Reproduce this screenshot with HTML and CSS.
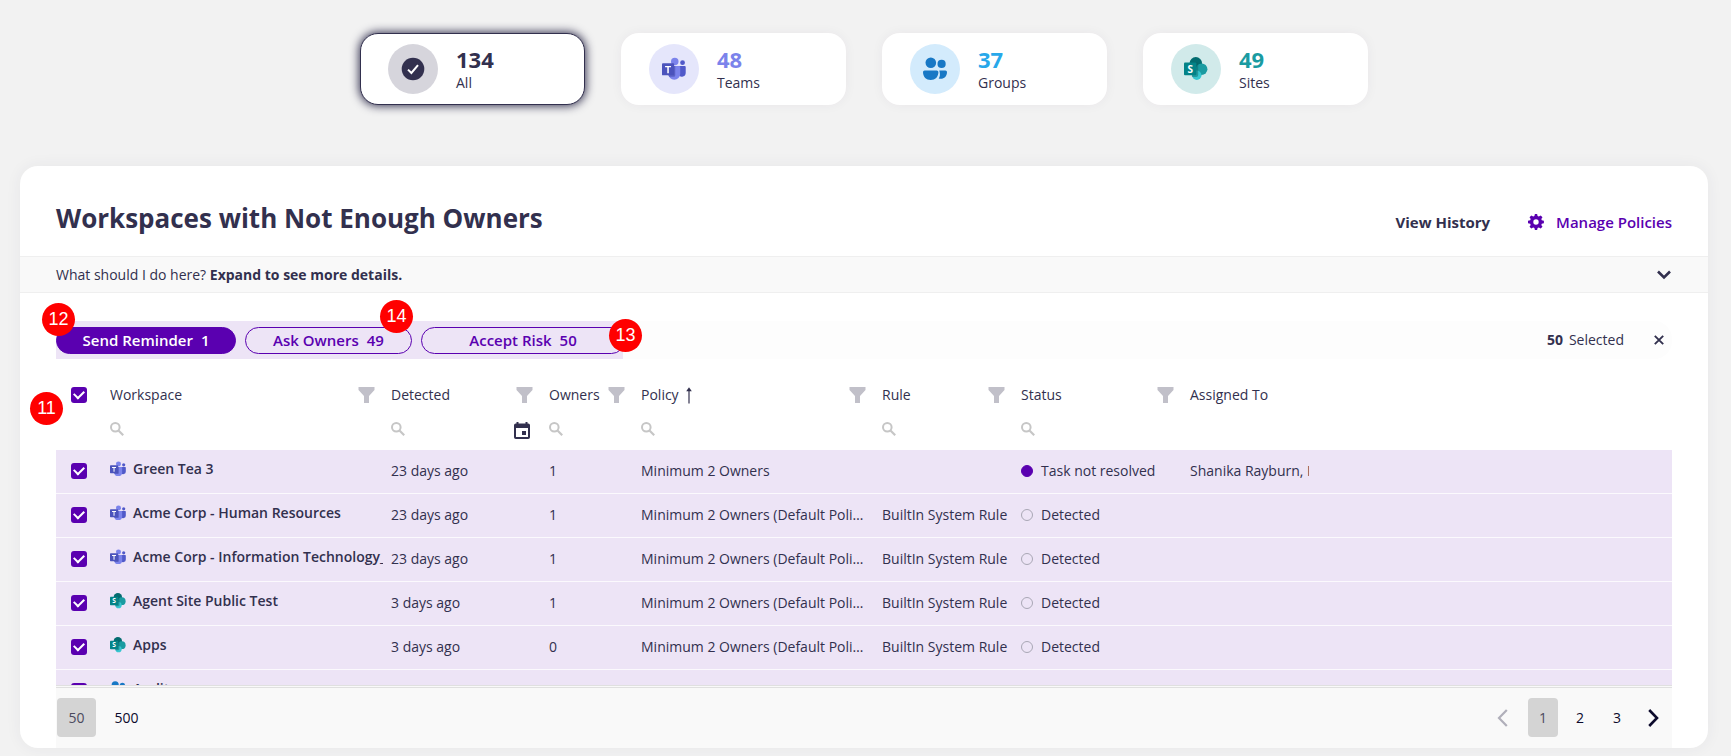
FILE: index.html
```html
<!DOCTYPE html>
<html lang="en">
<head>
<meta charset="utf-8">
<title>Workspaces with Not Enough Owners</title>
<link rel="stylesheet" href="styles.css">
</head>
<body>
<svg class="sprite" aria-hidden="true">
  <symbol id="i-teams" viewBox="0 0 25 24">
    <circle cx="21.4" cy="5.4" r="2.5" fill="#5059c9"/>
    <path d="M16.5 8.8h7.2a1 1 0 0 1 1 1v6a4.1 4.1 0 0 1-7.5 2.4z" fill="#5059c9"/>
    <circle cx="13.3" cy="4.2" r="3.9" fill="#7b83eb"/>
    <path d="M7.5 8.8h10.4a1.1 1.1 0 0 1 1.1 1.1v7a6.2 6.2 0 0 1-12.4 0V9.7z" fill="#7b83eb"/>
    <path d="M6.6 8.8h7.2v9.6a1.6 1.6 0 0 1-1.6 1.6H7.4a6.5 6.5 0 0 1-.8-3z" fill="#5b62c5"/>
    <rect x="0" y="6" width="12.6" height="12.6" rx="1" fill="#4b53bc"/>
    <path d="M3.2 8.8h6.2v1.5H7.1v6H5.5v-6H3.2z" fill="#fff"/>
  </symbol>
  <symbol id="i-site" viewBox="0 0 24 24">
    <circle cx="11.8" cy="6.4" r="6.3" fill="#036c70"/>
    <circle cx="17.6" cy="12.2" r="5.8" fill="#1a9ba1"/>
    <circle cx="12.8" cy="18.2" r="4.7" fill="#37c6d0"/>
    <path d="M7 5.6h6.2a1 1 0 0 1 1 1V18a2 2 0 0 1-2 2H8z" fill="#0a5e61" opacity=".45"/>
    <rect x="0" y="5.6" width="12.4" height="12.6" rx="1" fill="#038387"/>
    <text class="logo-letter" x="6.2" y="15.6" text-anchor="middle">S</text>
  </symbol>
  <symbol id="i-group" viewBox="0 0 24 24">
    <circle cx="7.8" cy="5.7" r="5.3" fill="#1878c5"/>
    <circle cx="18.6" cy="6.9" r="4.1" fill="#1878c5"/>
    <path d="M1.6 13.4h12.2a1.6 1.6 0 0 1 1.6 1.6c0 5-3.2 8-7.7 8S0 20 0 15a1.6 1.6 0 0 1 1.6-1.6z" fill="#1878c5"/>
    <path d="M16.3 13.4h6.1A1.6 1.6 0 0 1 24 15c0 4.300-2.600 6.800-6.200 6.800-.8 0-1.500-.1-2.100-.3 1.300-1.800 1.700-4.300.6-8.100z" fill="#1878c5"/>
  </symbol>
  <symbol id="i-all" viewBox="0 0 24 24">
    <circle cx="12" cy="12" r="11.300" fill="#32304e"/>
    <path d="M7 12.600l3.400 3.400 6.600-7.800" fill="none" stroke="#fff" stroke-width="2"/>
  </symbol>
  <symbol id="i-gear" viewBox="0 0 16 16">
    <path fill-rule="evenodd" d="M6.900 0h2.200l.5 2.100 1.200.5 1.900-1.200 1.800 1.800-1.200 1.900.5 1.200 2.100.5v2.400l-2.100.5-.5 1.200 1.200 1.900-1.800 1.800-1.900-1.200-1.200.5L9.100 16H6.900l-.5-2.100-1.200-.5-1.900 1.200-1.800-1.800 1.200-1.900-.5-1.200L0 9.200V6.800l2.200-.5.5-1.200-1.200-1.900 1.800-1.800 1.900 1.200 1.200-.5zM8 5.300a2.700 2.700 0 1 0 0 5.400 2.700 2.700 0 0 0 0-5.400z" fill="currentColor"/>
  </symbol>
  <symbol id="i-filter" viewBox="0 0 16 16">
    <path d="M0 0h16v3l-5.500 6v7h-5V9L0 3z" fill="currentColor"/>
  </symbol>
  <symbol id="i-search" viewBox="0 0 14 14">
    <circle cx="5.300" cy="5.300" r="4.300" fill="none" stroke="currentColor" stroke-width="2"/>
    <path d="M8.500 8.500l4.700 4.700" stroke="currentColor" stroke-width="2.200"/>
  </symbol>
  <symbol id="i-calendar" viewBox="0 0 16 17">
    <path fill-rule="evenodd" d="M2.500 0h2v1.500h7V0h2v1.500h.7A1.800 1.800 0 0 1 16 3.300v11.900a1.800 1.800 0 0 1-1.800 1.800H1.800A1.800 1.800 0 0 1 0 15.200V3.300a1.800 1.800 0 0 1 1.800-1.800h.7zM2 6v9h12V6zm6 3h4v4H8z" fill="currentColor"/>
  </symbol>
  <symbol id="i-sort" viewBox="0 0 8 17">
    <path d="M4 16.500V2" stroke="currentColor" stroke-width="1.200"/>
    <path d="M4 .3l2.800 4H1.200z" fill="currentColor"/>
  </symbol>
</svg>

<nav class="tiles" aria-label="Workspace type">
  <button class="tile tile-active" type="button">
    <span class="tile-icon tint-all"><svg class="icon-24"><use href="#i-all"/></svg></span>
    <span class="tile-text"><span class="tile-count">134</span><span class="tile-label">All</span></span>
  </button>
  <button class="tile" type="button">
    <span class="tile-icon tint-teams"><svg class="icon-24"><use href="#i-teams"/></svg></span>
    <span class="tile-text"><span class="tile-count ink-teams">48</span><span class="tile-label">Teams</span></span>
  </button>
  <button class="tile" type="button">
    <span class="tile-icon tint-groups"><svg class="icon-24"><use href="#i-group"/></svg></span>
    <span class="tile-text"><span class="tile-count ink-groups">37</span><span class="tile-label">Groups</span></span>
  </button>
  <button class="tile" type="button">
    <span class="tile-icon tint-sites"><svg class="icon-24"><use href="#i-site"/></svg></span>
    <span class="tile-text"><span class="tile-count ink-sites">49</span><span class="tile-label">Sites</span></span>
  </button>
</nav>

<main class="panel">
  <header class="panel-head">
    <h1 class="title">Workspaces with Not Enough Owners</h1>
    <a class="link-history" href="#">View History</a>
    <a class="link-policies" href="#"><svg class="icon-16"><use href="#i-gear"/></svg>Manage Policies</a>
  </header>

  <button class="help" type="button">
    <span>What should I do here? <strong>Expand to see more details.</strong></span>
    <svg class="help-chevron" viewBox="0 0 14 10"><path d="M1 1.500l6 6 6-6" fill="none" stroke="currentColor" stroke-width="2.600"/></svg>
  </button>

  <div class="toolbar">
    <div class="actions">
      <button class="action action-primary" type="button"><span>Send Reminder</span><span>1</span></button>
      <button class="action" type="button"><span>Ask Owners</span><span>49</span></button>
      <button class="action action-wide" type="button"><span>Accept Risk</span><span>50</span></button>
    </div>
    <p class="selected"><strong>50</strong><span>Selected</span></p>
    <button class="clear" type="button" aria-label="Clear selection"><svg class="clear-icon" viewBox="0 0 10 10"><path d="M.8.8l8.400 8.400M9.200.8L.8 9.200" stroke="currentColor" stroke-width="1.900"/></svg></button>
    <span class="marker marker-12">12</span>
    <span class="marker marker-14">14</span>
    <span class="marker marker-13">13</span>
  </div>

  <section class="grid">
    <span class="marker marker-11">11</span>
    <div class="grid-scroll">
      <table class="table">
        <colgroup>
          <col class="c-check"><col class="c-workspace"><col class="c-detected"><col class="c-owners"><col class="c-policy"><col class="c-rule"><col class="c-status"><col class="c-assigned"><col>
        </colgroup>
        <thead>
          <tr class="head-row">
            <th class="cell-check"><input class="check" type="checkbox" checked aria-label="Select all"></th>
            <th><div class="head">Workspace<svg class="filter"><use href="#i-filter"/></svg></div></th>
            <th><div class="head">Detected<svg class="filter"><use href="#i-filter"/></svg></div></th>
            <th><div class="head">Owners<svg class="filter"><use href="#i-filter"/></svg></div></th>
            <th><div class="head">Policy<svg class="sort"><use href="#i-sort"/></svg><svg class="filter"><use href="#i-filter"/></svg></div></th>
            <th><div class="head">Rule<svg class="filter"><use href="#i-filter"/></svg></div></th>
            <th><div class="head">Status<svg class="filter"><use href="#i-filter"/></svg></div></th>
            <th><div class="head">Assigned To</div></th>
            <th></th>
          </tr>
          <tr class="search-row">
            <td></td>
            <td><label class="search"><svg class="icon-14"><use href="#i-search"/></svg><input class="search-input" type="text" aria-label="Search workspace"></label></td>
            <td><label class="search"><svg class="icon-14"><use href="#i-search"/></svg><input class="search-input" type="text" aria-label="Search detected"><svg class="calendar"><use href="#i-calendar"/></svg></label></td>
            <td><label class="search"><svg class="icon-14"><use href="#i-search"/></svg><input class="search-input" type="text" aria-label="Search owners"></label></td>
            <td><label class="search"><svg class="icon-14"><use href="#i-search"/></svg><input class="search-input" type="text" aria-label="Search policy"></label></td>
            <td><label class="search"><svg class="icon-14"><use href="#i-search"/></svg><input class="search-input" type="text" aria-label="Search rule"></label></td>
            <td><label class="search"><svg class="icon-14"><use href="#i-search"/></svg><input class="search-input" type="text" aria-label="Search status"></label></td>
            <td></td>
            <td></td>
          </tr>
        </thead>
        <tbody>
          <tr class="row">
            <td class="cell-check"><input class="check" type="checkbox" checked aria-label="Select Green Tea 3"></td>
            <td><a class="workspace" href="#"><svg class="icon-16"><use href="#i-teams"/></svg>Green Tea 3</a></td>
            <td>23 days ago</td><td>1</td><td>Minimum 2 Owners</td><td></td>
            <td><span class="status"><i class="dot dot-on"></i>Task not resolved</span></td>
            <td><div class="assigned">Shanika Rayburn, Ryan Gregory</div></td><td></td>
          </tr>
          <tr class="row">
            <td class="cell-check"><input class="check" type="checkbox" checked aria-label="Select Acme Corp - Human Resources"></td>
            <td><a class="workspace" href="#"><svg class="icon-16"><use href="#i-teams"/></svg>Acme Corp - Human Resources</a></td>
            <td>23 days ago</td><td>1</td><td>Minimum 2 Owners (Default Policy)</td><td class="cell-rule">BuiltIn System Rule</td>
            <td><span class="status"><i class="dot"></i>Detected</span></td><td></td><td></td>
          </tr>
          <tr class="row">
            <td class="cell-check"><input class="check" type="checkbox" checked aria-label="Select Acme Corp - Information Technology"></td>
            <td><a class="workspace" href="#"><svg class="icon-16"><use href="#i-teams"/></svg>Acme Corp - Information Technology_</a></td>
            <td>23 days ago</td><td>1</td><td>Minimum 2 Owners (Default Policy)</td><td class="cell-rule">BuiltIn System Rule</td>
            <td><span class="status"><i class="dot"></i>Detected</span></td><td></td><td></td>
          </tr>
          <tr class="row">
            <td class="cell-check"><input class="check" type="checkbox" checked aria-label="Select Agent Site Public Test"></td>
            <td><a class="workspace" href="#"><svg class="icon-16"><use href="#i-site"/></svg>Agent Site Public Test</a></td>
            <td>3 days ago</td><td>1</td><td>Minimum 2 Owners (Default Policy)</td><td class="cell-rule">BuiltIn System Rule</td>
            <td><span class="status"><i class="dot"></i>Detected</span></td><td></td><td></td>
          </tr>
          <tr class="row">
            <td class="cell-check"><input class="check" type="checkbox" checked aria-label="Select Apps"></td>
            <td><a class="workspace" href="#"><svg class="icon-16"><use href="#i-site"/></svg>Apps</a></td>
            <td>3 days ago</td><td>0</td><td>Minimum 2 Owners (Default Policy)</td><td class="cell-rule">BuiltIn System Rule</td>
            <td><span class="status"><i class="dot"></i>Detected</span></td><td></td><td></td>
          </tr>
          <tr class="row">
            <td class="cell-check"><input class="check" type="checkbox" checked aria-label="Select Audit"></td>
            <td><a class="workspace" href="#"><svg class="icon-16"><use href="#i-group"/></svg>Audit</a></td>
            <td>3 days ago</td><td>1</td><td>Minimum 2 Owners (Default Policy)</td><td class="cell-rule">BuiltIn System Rule</td>
            <td><span class="status"><i class="dot"></i>Detected</span></td><td></td><td></td>
          </tr>
        </tbody>
      </table>
    </div>
    <footer class="pager">
      <button class="size size-current" type="button">50</button>
      <button class="size" type="button">500</button>
      <button class="step step-prev" type="button" disabled aria-label="Previous page"><svg class="step-icon" viewBox="0 0 11 18"><path d="M9.800 1L2 9l7.800 8" fill="none" stroke="currentColor" stroke-width="2.200"/></svg></button>
      <button class="page page-current" type="button">1</button>
      <button class="page" type="button">2</button>
      <button class="page" type="button">3</button>
      <button class="step" type="button" aria-label="Next page"><svg class="step-icon" viewBox="0 0 11 18"><path d="M1.200 1L9 9l-7.800 8" fill="none" stroke="currentColor" stroke-width="2.600"/></svg></button>
    </footer>
  </section>
</main>
</body>
</html>
```
FILE: styles.css
```css
* { box-sizing: border-box; }

body {
  margin: 0;
  height: 100vh;
  padding: 33px 23px 8px 20px;
  display: flex;
  flex-direction: column;
  overflow: hidden;
  background: #f2f2f2;
  color: #32304e;
  font: 14px/20px "Open Sans", "Noto Sans", sans-serif;
}

button, input { font: inherit; color: inherit; }
button { border: 0; padding: 0; background: none; cursor: pointer; }
a { color: inherit; text-decoration: none; }
svg { display: block; flex: none; }
strong { font-weight: 700; }

.sprite { position: absolute; width: 0; height: 0; }
.logo-letter { font: 700 10px "Open Sans", sans-serif; fill: #fff; }
.icon-14 { width: 14px; height: 14px; }
.icon-16 { width: 16px; height: 16px; }
.icon-24 { width: 24px; height: 24px; }

/* Type tiles */
.tiles { display: flex; justify-content: center; gap: 36px; margin-bottom: 61px; }
.tile {
  display: flex;
  align-items: center;
  gap: 18px;
  width: 225px;
  height: 72px;
  padding-left: 28px;
  border-radius: 18px;
  background: #fff;
  box-shadow: 0 0 12px rgba(50, 48, 78, .05);
  text-align: left;
}
.tile-active { padding-left: 27px; border: 1px solid #32304e; box-shadow: 0 0 10px 1px #32304e; }
.tile-icon { display: grid; place-items: center; width: 50px; height: 50px; border-radius: 50%; }
.tile-text { display: flex; flex-direction: column; }
.tile-count { font-size: 22px; line-height: 28px; font-weight: 700; }
.tile-label { line-height: 20px; }
.tint-all { background: #d6d5dc; }
.tint-teams { background: #e5e6fb; }
.tint-groups { background: #d3ebfc; }
.tint-sites { background: #d1eaea; }
.ink-teams { color: #7b83eb; }
.ink-groups { color: #28a8ea; }
.ink-sites { color: #1a9ba1; }

/* Panel */
.panel {
  flex: 1;
  min-height: 0;
  display: flex;
  flex-direction: column;
  border-radius: 18px;
  background: #fff;
  box-shadow: 0 0 16px rgba(50, 48, 78, .06);
}
.panel-head { display: flex; align-items: center; height: 90px; padding: 14px 36px 0; font-size: 15px; }
.title { margin: 0 auto 0 0; font-size: 26px; line-height: 36px; font-weight: 700; }
.link-history { margin-top: 8px; font-weight: 700; }
.link-policies { display: flex; align-items: center; gap: 12px; margin: 8px 0 0 38px; color: #5a00b0; font-weight: 600; }
.help {
  display: flex;
  align-items: center;
  justify-content: space-between;
  height: 37px;
  padding: 0 37px 0 36px;
  border: solid #efefef;
  border-width: 1px 0;
  background: #f9f9f9;
}
.help-chevron { width: 14px; height: 10px; }

/* Selection toolbar */
.toolbar {
  position: relative;
  display: flex;
  align-items: center;
  height: 38px;
  margin: 28px 36px 0;
  border-radius: 0 18px 18px 0;
  background: #fdfdfd;
}
.actions {
  display: flex;
  align-items: center;
  gap: 9px;
  width: 567px;
  height: 38px;
  overflow: hidden;
  background: #ede4f6;
}
.action {
  display: flex;
  flex: none;
  align-items: center;
  justify-content: center;
  gap: 8px;
  width: 167px;
  height: 27px;
  border: 1px solid #5a00b0;
  border-radius: 14px;
  color: #5a00b0;
  font-size: 15px;
  font-weight: 600;
}
.action-primary { width: 180px; background: #5a00b0; color: #fff; }
.action-wide { width: 204px; }
.selected { display: flex; gap: 6px; margin: 0 0 0 auto; }
.clear { margin: 0 8px 0 30px; }
.clear-icon { width: 10px; height: 10px; }

.marker {
  position: absolute;
  width: 33px;
  height: 33px;
  border-radius: 50%;
  background: #f00;
  color: #fff;
  font: 18px/33px "Liberation Sans", Arial, sans-serif;
  text-align: center;
}
.marker-12 { left: -14px; top: -18px; }
.marker-14 { left: 324px; top: -21px; }
.marker-13 { left: 553px; top: -2px; }
.marker-11 { left: -26px; top: 33px; }

/* Grid */
.grid {
  position: relative;
  flex: 1;
  min-height: 0;
  display: flex;
  flex-direction: column;
  margin: 0 36px;
}
.grid-scroll { flex: 1; min-height: 0; overflow: hidden; }
.table { width: 100%; table-layout: fixed; border-collapse: separate; border-spacing: 0; }
.c-check { width: 46px; }
.c-workspace { width: 281px; }
.c-detected { width: 158px; }
.c-owners { width: 92px; }
.c-policy { width: 241px; }
.c-rule { width: 139px; }
.c-status { width: 169px; }
.c-assigned { width: 135px; }
.table th, .table td {
  padding: 0 8px;
  overflow: hidden;
  font-weight: 400;
  text-align: left;
  text-overflow: ellipsis;
  white-space: nowrap;
}
.table .cell-check { padding: 0 0 0 15px; }
.table .cell-rule { padding-right: 0; }
.head-row { height: 50px; }
.table .head-row th { padding-top: 22px; }
.search-row { height: 41px; }
.head { display: flex; align-items: center; }
.filter { width: 17px; height: 16px; margin-left: auto; color: #c1c0c9; }
.sort { width: 8px; height: 17px; margin-left: 6px; }
.search { display: flex; align-items: center; gap: 4px; padding: 0 3px 2px 0; color: #c6c6c6; }
.search-input { flex: 1; min-width: 0; height: 20px; padding: 0; border: 0; outline: 0; background: none; }
.calendar { width: 16px; height: 17px; margin-top: 3px; color: #32304e; }

.row { height: 44px; background: #ede4f6; }
.table .row td { padding-bottom: 2px; border-bottom: 1px solid #fbf9fd; }
.check {
  appearance: none;
  display: grid;
  place-items: center;
  width: 16px;
  height: 16px;
  margin: 0;
  border-radius: 3px;
  background: #5a00b0;
}
.check::after {
  content: "";
  width: 8px;
  height: 5px;
  margin-top: -3px;
  border: solid #fff;
  border-width: 0 0 2px 2px;
  transform: rotate(-45deg);
}
.workspace { display: flex; align-items: center; gap: 7px; padding: 0 0 4px; margin-right: -8px; overflow: hidden; font-weight: 600; }
.status { display: flex; align-items: center; gap: 8px; }
.dot { width: 12px; height: 12px; border: 1px solid #a9a7b5; border-radius: 50%; }
.dot-on { border-color: #5a00b0; background: #5a00b0; }
.assigned { overflow: hidden; }

/* Pager */
.pager {
  display: flex;
  align-items: center;
  height: 63px;
  padding: 0 13px 1px 1px;
  border-top: 3px double #e0e0e0;
  background: #f9f9f9;
  color: #0c0a2c;
}
.size { height: 39px; width: 39px; margin-right: 11px; border-radius: 4px; }
.size-current, .page-current { background: #d4d4d4; color: #4b4a5e; }
.page { width: 30px; height: 39px; margin-right: 7px; border-radius: 4px; }
.step { margin-left: 9px; }
.step-prev { margin: 0 20px 0 auto; color: #b0afba; }
.step-icon { width: 11px; height: 18px; }
```
